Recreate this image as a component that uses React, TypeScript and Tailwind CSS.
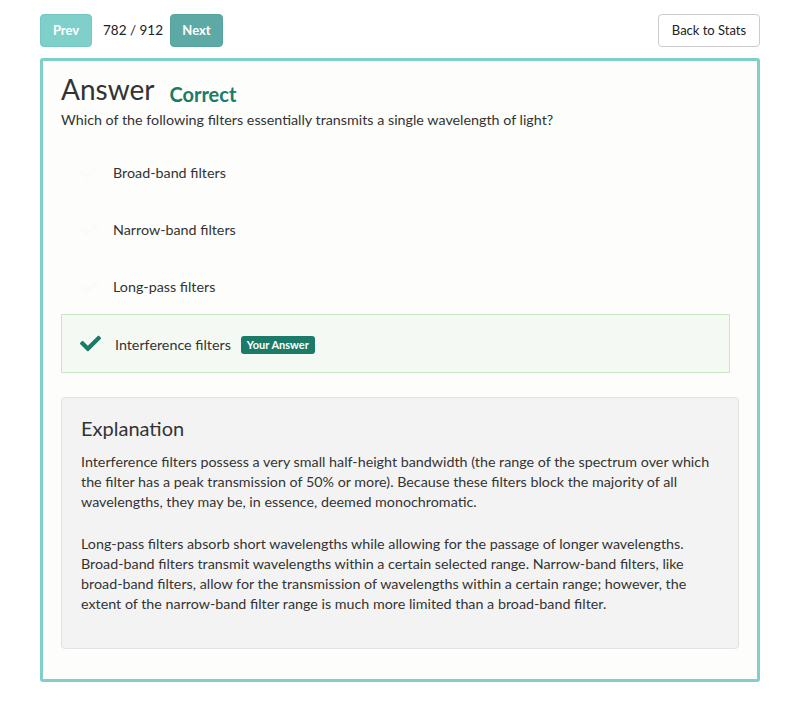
import React from 'react';

const Check: React.FC<{ className?: string }> = ({ className }) => (
  <svg viewBox="0 0 512 512" className={className} fill="currentColor">
    <path d="M173.9 439.4L7.5 273c-10-10-10-26.2 0-36.2l36.2-36.2c10-10 26.2-10 36.2 0L192 312.7 432.1 72.6c10-10 26.2-10 36.2 0l36.2 36.2c10 10 10 26.2 0 36.2L210.1 439.4c-10 10-26.2 10-36.2 0z" />
  </svg>
);

const options = ['Broad-band filters', 'Narrow-band filters', 'Long-pass filters'];

const App: React.FC = () => {
  return (
    <div className="min-h-screen bg-white px-10 pt-[14px] text-[#333]" style={{ fontFamily: 'Lato, "Open Sans", sans-serif' }}>
      {/* nav */}
      <div className="flex items-center justify-between">
        <div className="flex items-center">
          <button className="h-[33px] w-[52px] rounded-[4px] border border-[#74c7c3] bg-[#7fcfcb] text-[13px] font-bold text-white">
            Prev
          </button>
          <span className="ml-[11px] text-[13.5px] text-[#222]">782 / 912</span>
          <button className="ml-[7px] h-[33px] w-[53px] rounded-[4px] border border-[#56a29e] bg-[#5da9a5] text-[13px] font-bold text-white">
            Next
          </button>
        </div>
        <button className="h-[33px] w-[102px] rounded-[4px] border border-[#cccccc] bg-white text-[13px] text-[#222]">
          Back to Stats
        </button>
      </div>

      {/* card */}
      <div className="mt-[11px] w-[720px] rounded-[3px] border-[3px] border-[#7fcfcb] bg-[#fdfdfb] pl-[18px] pr-[18px] pb-[30px] text-[14.3px]">
        <div className="flex items-end pt-[10px]">
          <h1 className="text-[28px] leading-[36px] text-[#333]">Answer</h1>
          <span className="mb-[-2px] ml-[15px] text-[20px] font-bold text-[#1b7a68]">Correct</span>
        </div>
        <p className="mt-[3px] leading-[20px]">Which of the following filters essentially transmits a single wavelength of light?</p>

        <div className="mr-[9px] mt-[13px] flex flex-col">
          {options.map((o) => (
            <div key={o} className="flex h-[57px] items-center pl-[19px] pt-[2px]">
              <Check className="h-[19px] w-[19px] text-[#fbfbf9]" />
              <span className="ml-[14px]">{o}</span>
            </div>
          ))}
          <div className="flex h-[59px] items-center border border-[#c9e7c1] bg-[#f4f9f4] pl-[18px] pt-[3px]">
            <Check className="-mt-[3px] h-[21px] w-[21px] text-[#1b7a68]" />
            <span className="ml-[14px]">Interference filters</span>
            <span className="ml-[10px] rounded-[3px] bg-[#1b7a68] px-[6px] py-[2px] text-[11px] font-bold leading-[14px] text-white">
              Your Answer
            </span>
          </div>
        </div>

        <div className="mt-[24px] rounded-[4px] border border-[#e2e2e2] bg-[#f3f3f3] px-[19px] pt-[16px] pb-[34px]">
          <h2 className="text-[20px] leading-[28px] text-[#333]">Explanation</h2>
          <p className="mt-[10px] leading-[20px]">
            Interference filters possess a very small half-height bandwidth (the range of the spectrum over which the filter has a peak transmission of 50% or more). Because these filters block the majority of all wavelengths, they may be, in essence, deemed monochromatic.
          </p>
          <p className="mt-[22px] leading-[20px]">
            Long-pass filters absorb short wavelengths while allowing for the passage of longer wavelengths. Broad-band filters transmit wavelengths within a certain selected range. Narrow-band filters, like broad-band filters, allow for the transmission of wavelengths within a certain range; however, the extent of the narrow-band filter range is much more limited than a broad-band filter.
          </p>
        </div>
      </div>
    </div>
  );
};

export default App;
